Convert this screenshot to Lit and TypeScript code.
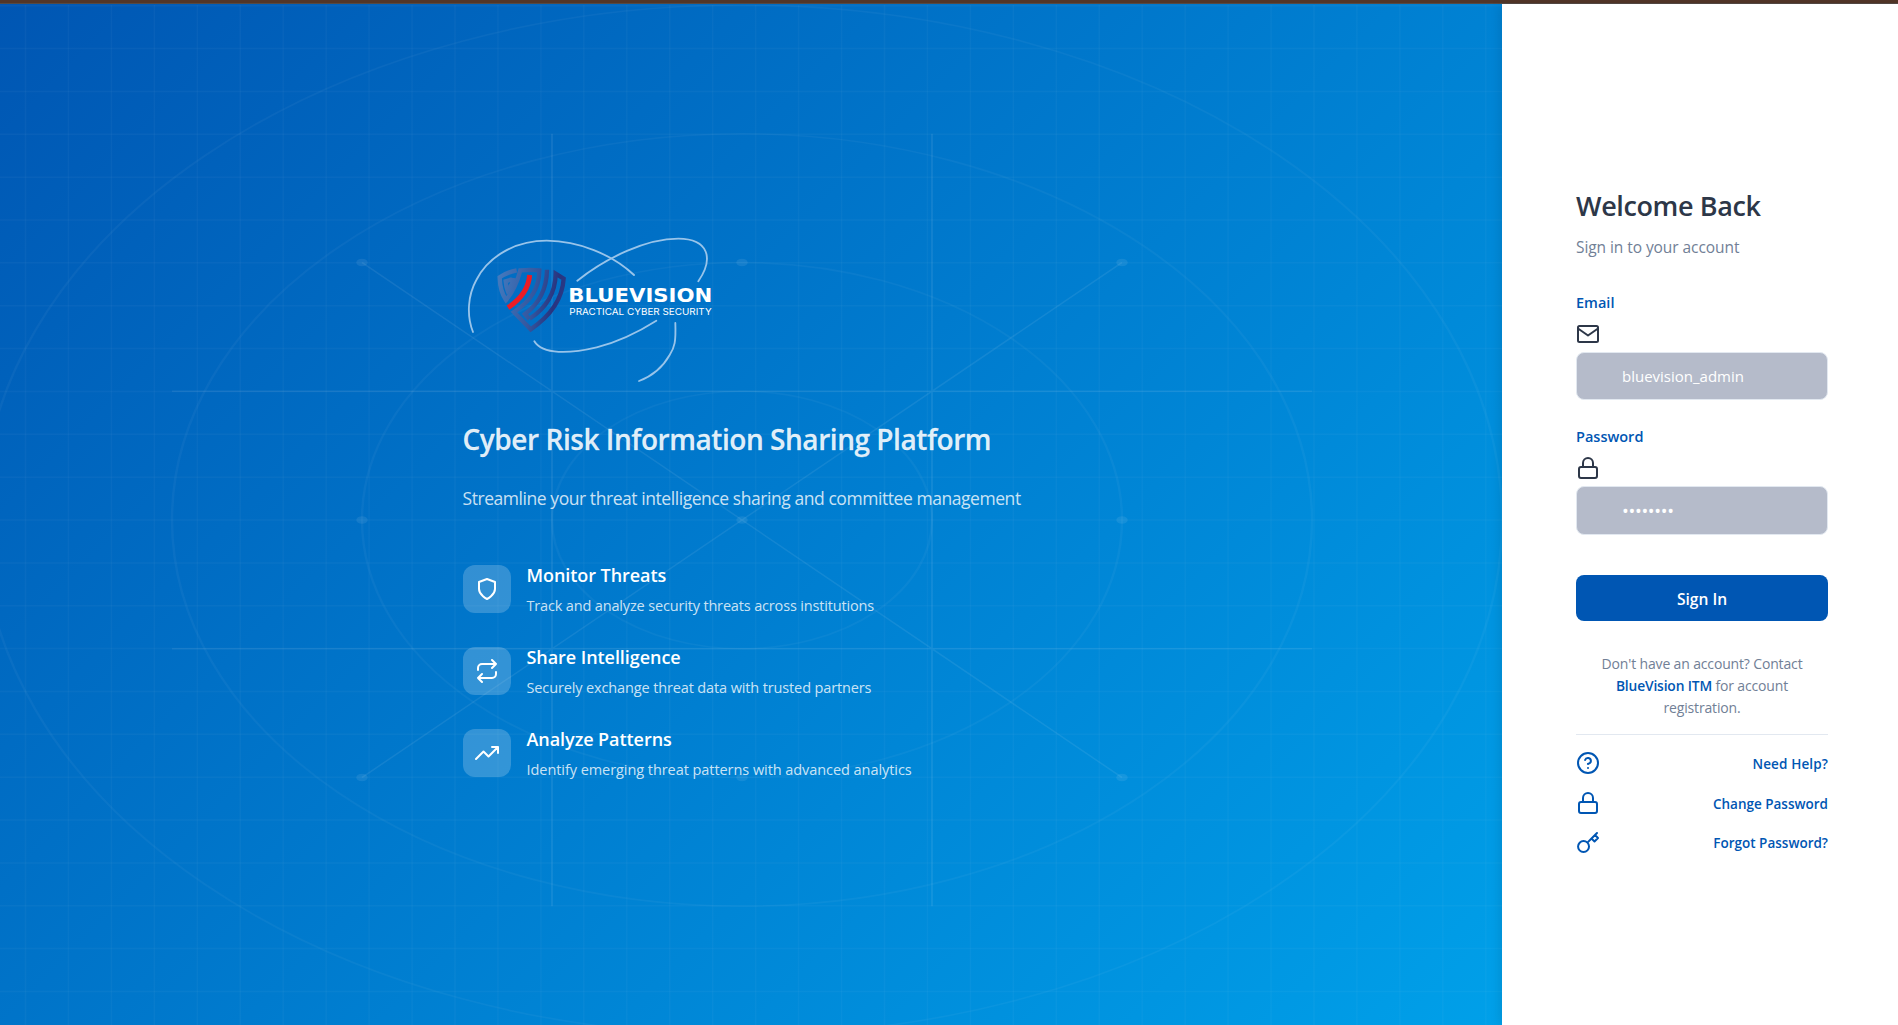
import { LitElement, html, css, svg } from "lit";
import { customElement } from "lit/decorators.js";

const lock = svg`<rect x="3" y="11" width="18" height="11" rx="2"></rect><path d="M7 11V7a5 5 0 0 1 10 0v4"></path>`;
const mail = svg`<rect x="2" y="4" width="20" height="16" rx="1.5"></rect><path d="m22 6.5-10 7-10-7"></path>`;
const help = svg`<circle cx="12" cy="12" r="10"></circle><path d="M9.09 9a3 3 0 0 1 5.83 1c0 2-3 3-3 3M12 17h.01"></path>`;
const key = svg`<path d="M21 2l-2 2m-7.61 7.61a5.5 5.5 0 1 1-7.778 7.778 5.5 5.5 0 0 1 7.777-7.777zm0 0L15.5 7.5m0 0l3 3L22 7l-3-3m-3.5 3.5L19 4"></path>`;
const shield = svg`<path d="M12 22s8-4 8-10V5l-8-3-8 3v7c0 6 8 10 8 10z"></path>`;
const repeat = svg`<path d="M17 1l4 4-4 4M3 11V9a4 4 0 0 1 4-4h14M7 23l-4-4 4-4M21 13v2a4 4 0 0 1-4 4H3"></path>`;
const trend = svg`<path d="M23 6l-9.5 9.5-5-5L1 18M17 6h6v6"></path>`;

const icon = (shape: unknown, size = 24) =>
  html`<svg class="icon" width=${size} height=${size} viewBox="0 0 24 24">${shape}</svg>`;

const features = [
  { icon: shield, title: "Monitor Threats", text: "Track and analyze security threats across institutions", cls: "f1" },
  { icon: repeat, title: "Share Intelligence", text: "Securely exchange threat data with trusted partners", cls: "f2" },
  { icon: trend, title: "Analyze Patterns", text: "Identify emerging threat patterns with advanced analytics", cls: "f3" },
];

const links = [
  { icon: help, text: "Need Help?" },
  { icon: lock, text: "Change Password" },
  { icon: key, text: "Forgot Password?" },
];

@customElement("app-root")
export class AppRoot extends LitElement {
  static styles = css`
    :host {
      display: flex;
      flex-direction: column;
      height: 100vh;
      overflow: hidden;
      font-family: "Open Sans", "Noto Sans", sans-serif;
    }
    * { box-sizing: border-box; margin: 0; }
    svg { display: block; flex: none; }
    .icon { fill: none; stroke: currentColor; stroke-width: 2; stroke-linecap: round; stroke-linejoin: round; }
    .bar { height: 4px; flex: none; background: #523628; border-bottom: 1px solid #554a45; }
    .page { display: flex; flex: 1; min-height: 0; }
    .hero {
      flex: 1;
      position: relative;
      overflow: hidden;
      padding: 231px 0 0 462.5px;
      color: #fff;
      background: linear-gradient(135deg, #0056b3 0%, #00a0e9 100%);
    }
    .net { position: absolute; left: -18px; top: 0.6px; }
    .content { position: relative; }
    .logo { margin-bottom: 36px; }
    h1 { font-size: 28px; line-height: 36px; font-weight: 600; letter-spacing: -0.45px; color: rgba(255, 255, 255, 0.9); margin-bottom: 26px; white-space: nowrap; -webkit-text-stroke: 0.3px rgba(255, 255, 255, 0.6); }
    .lead { font-size: 17.5px; line-height: 30px; letter-spacing: -0.44px; color: rgba(255, 255, 255, 0.8); margin-bottom: 52px; }
    .features { display: flex; flex-direction: column; gap: 34px; }
    .feature { display: flex; gap: 16px; height: 48px; }
    .tile { width: 48px; height: 48px; border-radius: 12px; background: rgba(255, 255, 255, 0.2); display: flex; align-items: center; justify-content: center; }
    .copy { margin-top: -2px; white-space: nowrap; }
    h3 { font-size: 18px; line-height: 24px; font-weight: 600; letter-spacing: -0.06px; margin-bottom: 8px; }
    .desc { font-size: 14.5px; line-height: 22px; color: rgba(255, 255, 255, 0.8); }
    .f1 { letter-spacing: -0.16px; }
    .f2 { letter-spacing: -0.13px; }
    .f3 { letter-spacing: -0.06px; }
    .side {
      position: relative;
      width: 396px;
      padding: 184px 70px 0 74px;
      background: #fff;
      color: #2d3748;
      box-shadow: -2px 0 10px rgba(0, 0, 0, 0.1);
    }
    h2 { font-size: 27px; line-height: 36px; font-weight: 600; letter-spacing: -0.38px; margin-bottom: 11px; white-space: nowrap; }
    .sub { font-size: 15.5px; line-height: 24px; letter-spacing: -0.07px; color: #718096; margin-bottom: 34px; }
    .field { margin-bottom: 26px; }
    .label { font-size: 14.5px; line-height: 20px; font-weight: 600; color: #0056b3; margin-bottom: 9px; }
    .input {
      margin-top: 6px;
      height: 48px;
      padding-left: 45px;
      border: 1px solid #e2e8f0;
      border-radius: 8px;
      background: #b5bbca;
      color: #fff;
      font-size: 15px;
      line-height: 47px;
    }
    .field + .field { margin-top: 27px; margin-bottom: 0; }
    .field:first-of-type { margin-bottom: 0; }
    .secret { height: 49px; font-size: 18px; line-height: 49px; letter-spacing: -0.3px; }
    .button { margin-top: 40px; height: 46px; border-radius: 8px; background: #0056b3; color: #fff; text-align: center; font-size: 15.6px; font-weight: 600; line-height: 49px; }
    .note { margin: 32px 0 15px; font-size: 14px; line-height: 22px; letter-spacing: -0.15px; text-align: center; color: #718096; }
    .note b { font-weight: 600; font-size: 13.8px; color: #0056b3; }
    .links { border-top: 1px solid #e2e8f0; padding-top: 16px; display: flex; flex-direction: column; gap: 16px; color: #0056b3; }
    .link { display: flex; justify-content: space-between; height: 24px; font-size: 13.5px; line-height: 26px; font-weight: 600; }
    .link:first-child { letter-spacing: 0.12px; }
    .link:last-child { line-height: 24px; }
  `;

  private network() {
    const steps = Array.from({ length: 36 }, (_, i) => i);
    const pos = [200, 400, 600];
    return html`<svg class="net" width="1520" height="1030" viewBox="0 0 1520 1030" fill="none" stroke="#fff">
      <g stroke-opacity="0.03" stroke-width="1.5">
        ${steps.map((i) => svg`<path d=${`M${43.5 + i * 42.95} 0V1030`}></path>`)}
        ${steps.slice(0, 24).map((i) => svg`<path d=${`M0 ${0.7 + i * 42.86}H1520`}></path>`)}
      </g>
      <g transform="scale(1.9 1.2875)">
        <g stroke-opacity="0.04" stroke-width="1.3">
          ${[100, 200, 300, 400].map((r) => svg`<circle cx="400" cy="400" r=${r}></circle>`)}
        </g>
        <g stroke-opacity="0.075" stroke-width="1">
          <path d="M300 100V700M500 100V700M100 300H700M100 500H700M200 200L600 600M600 200L200 600"></path>
        </g>
        <g fill="#fff" fill-opacity="0.08" stroke="none">
          ${pos.map((y) => pos.map((x) => svg`<circle cx=${x} cy=${y} r="3"></circle>`))}
        </g>
      </g>
    </svg>`;
  }

  private logo() {
    return html`<svg class="logo" width="250" height="150" viewBox="69 45 750 450" fill="none">
      <defs>
        <linearGradient id="steel" gradientUnits="userSpaceOnUse" x1="172" y1="190" x2="377" y2="230">
          <stop offset="0" stop-color="#4379bd"></stop>
          <stop offset="0.55" stop-color="#34579f"></stop>
          <stop offset="0.85" stop-color="#28347f"></stop>
          <stop offset="1" stop-color="#283a88"></stop>
        </linearGradient>
      </defs>
      <g stroke="#98c4ea" stroke-width="5.5" stroke-linecap="round">
        <path d="M99 336C79 285 84 225 109 180C144 110 225 62 320 62C415 63 515 102 582 165"></path>
        <path d="M412 182C500 112 620 56 715 56C806 57 822 115 775 184"></path>
        <path d="M283 364C308 405 390 401 470 382C540 364 600 333 649 302"></path>
        <path d="M706 309C708 365 704 382 689 405C667 444 637 468 597 483"></path>
      </g>
      <g stroke="url(#steel)" stroke-width="13">
        <path d="M230 151C210 155 193 162 179 172C180 202 187 224 198 240C218 216 232 185 241 151C260 149 280 149 298 151C298 203 274 241 222 276L272 328C328 290 367 240 371 176L347 161C346 222 318 264 269 296"></path>
        <path d="M321 149C320 208 298 250 255 282L268 297"></path>
        <path d="M216 178L197 184C198 195 200 204 203 212C213 199 220 186 221 174"></path>
      </g>
      <path d="M269 165C266 205 243 237 204 263" stroke="#ec1c24" stroke-width="15"></path>
      <g fill="#fff">
        <text x="385" y="247" font-family="DejaVu Sans" font-weight="700" font-size="60" textLength="432" lengthAdjust="spacingAndGlyphs">BLUEVISION</text>
        <text x="388" y="284" font-family="Inter" font-weight="400" font-size="27.5" textLength="427" lengthAdjust="spacingAndGlyphs">PRACTICAL CYBER SECURITY</text>
      </g>
    </svg>`;
  }

  render() {
    return html`
      <div class="bar"></div>
      <div class="page">
        <section class="hero">
          ${this.network()}
          <div class="content">
            ${this.logo()}
            <h1>Cyber Risk Information Sharing Platform</h1>
            <p class="lead">Streamline your threat intelligence sharing and committee management</p>
            <div class="features">
              ${features.map((f) => html`<div class="feature">
                <div class="tile">${icon(f.icon)}</div>
                <div class="copy"><h3>${f.title}</h3><p class="desc ${f.cls}">${f.text}</p></div>
              </div>`)}
            </div>
          </div>
        </section>
        <aside class="side">
          <h2>Welcome Back</h2>
          <p class="sub">Sign in to your account</p>
          <div class="field">
            <div class="label">Email</div>
            ${icon(mail)}
            <div class="input">bluevision_admin</div>
          </div>
          <div class="field">
            <div class="label">Password</div>
            ${icon(lock)}
            <div class="input secret">••••••••</div>
          </div>
          <div class="button">Sign In</div>
          <p class="note">Don't have an account? Contact <b>BlueVision ITM</b> for account registration.</p>
          <div class="links">
            ${links.map((l) => html`<div class="link">${icon(l.icon)}<span>${l.text}</span></div>`)}
          </div>
        </aside>
      </div>`;
  }
}
